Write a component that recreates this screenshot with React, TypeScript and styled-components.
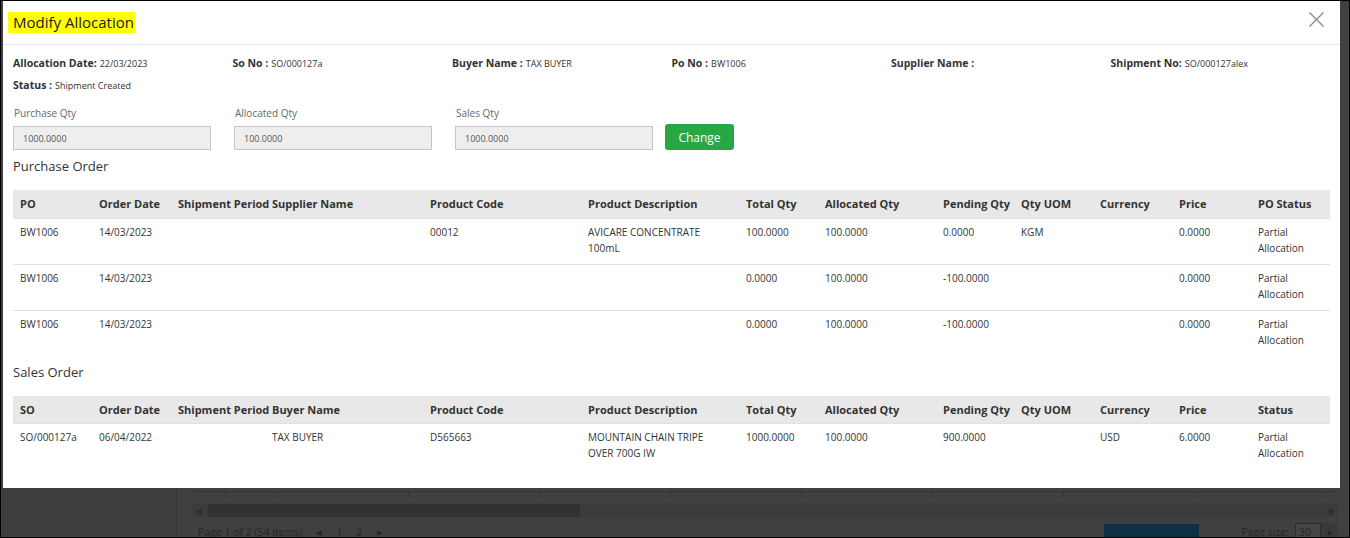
import React from "react"
import styled, { createGlobalStyle } from "styled-components"

const GlobalStyle = createGlobalStyle`
    html, body {
        margin: 0;
        padding: 0;
        background: #404040;
    }
    body {
        font-family: "Open Sans", "Liberation Sans", sans-serif;
    }
    * {
        box-sizing: border-box;
    }
`

// ---- page behind the overlay ----

const Screen = styled.div`
    position: relative;
    width: 1350px;
    height: 538px;
    border: 1px solid #000;
    background: #404040;
    overflow: hidden;
    display: flex;
`
const Sidebar = styled.div`
    width: 176px;
    flex-shrink: 0;
    background: #3e3e3e;
    border-right: 1px solid #363636;
`
const Main = styled.div`
    flex: 1;
    min-width: 0;
    display: flex;
    flex-direction: column;
    padding: 0 11px 0 16px;
`
const GridBody = styled.div`
    flex: 1;
    display: flex;
    flex-direction: column;
    justify-content: flex-end;
    padding-bottom: 5px;
`
const GridRow = styled.div`
    display: flex;
    height: 7px;
    border-top: 1px solid #333;
`
const GridCell = styled.div<{ w: number }>`
    width: ${p => p.w}px;
    flex-shrink: 0;
    border-right: 1px solid #333;
`
const ScrollBar = styled.div`
    height: 14px;
    background: #3b3b3b;
    display: flex;
    align-items: center;
    padding: 0 3px;
    color: #2c2c2c;
    font-size: 8px;
`
const ScrollThumb = styled.div`
    width: 372px;
    height: 13px;
    margin-left: 6px;
    background: #323232;
`
const ScrollGap = styled.div`
    flex: 1;
`
const Footer = styled.div`
    height: 20px;
    display: flex;
    align-items: flex-start;
    padding-top: 8px;
    font-size: 10.5px;
    color: #262626;
`
const Pager = styled.div`
    display: flex;
    gap: 14px;
    margin-left: 5px;
    line-height: 14px;
`
const FooterRight = styled.div`
    margin-left: auto;
    display: flex;
    align-items: flex-start;
`
const DarkButton = styled.div`
    width: 95px;
    height: 20px;
    margin-top: -1px;
    background: #0c3045;
    margin-right: 42px;
`
const PageSize = styled.div`
    line-height: 14px;
    margin-right: 6px;
`
const SizeBox = styled.div`
    width: 26px;
    height: 18px;
    margin-top: -2px;
    border: 1px solid #2c2c2c;
    background: #454545;
    padding-left: 3px;
    line-height: 16px;
`
const SizeArrow = styled.div`
    width: 17px;
    height: 18px;
    margin-top: -2px;
    background: #3a3a3a;
    text-align: center;
    line-height: 18px;
    font-size: 8px;
`

// ---- modal ----

const Modal = styled.div`
    position: absolute;
    top: 0;
    left: 2px;
    width: 1337px;
    height: 487px;
    background: #fff;
    display: flex;
    flex-direction: column;
    color: #333;
`
const ModalHeader = styled.div`
    height: 44px;
    flex-shrink: 0;
    border-bottom: 1px solid #e5e5e5;
    display: flex;
    align-items: center;
    justify-content: space-between;
    padding: 0 16px 0 5px;
`
const Title = styled.span`
    background: #ffff00;
    font-size: 15px;
    line-height: 21px;
    padding: 0 1px 0 5px;
    color: #222;
`
const CloseButton = styled.button`
    border: none;
    background: none;
    padding: 0;
    margin-bottom: 6px;
    width: 15px;
    height: 15px;
    cursor: pointer;
    display: flex;
`
const ModalBody = styled.div`
    padding: 0 10px 18px;
`
const InfoGrid = styled.div`
    display: grid;
    grid-template-columns: repeat(6, 1fr);
    row-gap: 5px;
    padding-top: 10px;
`
const InfoItem = styled.div`
    display: flex;
    align-items: baseline;
    gap: 3px;
    line-height: 16px;
    white-space: nowrap;
`
const InfoLabel = styled.span`
    font-weight: 700;
    font-size: 10.5px;
    color: #333;
`
const InfoValue = styled.span`
    font-size: 9px;
    color: #333;
`
const QtyRow = styled.div`
    display: flex;
    align-items: flex-end;
    margin-top: 12px;
`
const Field = styled.div`
    width: 198px;
    margin-right: 23px;
    display: flex;
    flex-direction: column;
`
const FieldLabel = styled.label`
    font-size: 10px;
    line-height: 14px;
    color: #666;
    margin-bottom: 6px;
    padding-left: 1px;
`
const QtyInput = styled.input`
    height: 24px;
    width: 100%;
    background: #eeeeee;
    border: 1px solid #c6c6c6;
    padding: 0 0 0 9px;
    font-family: "Open Sans", "Liberation Sans", sans-serif;
    font-size: 9px;
    color: #555;
    outline: none;
`
const ChangeButton = styled.button`
    margin-left: -11px;
    width: 69px;
    height: 26px;
    border: none;
    border-radius: 3px;
    background: #28a745;
    color: #fff;
    font-family: "Open Sans", "Liberation Sans", sans-serif;
    font-size: 12px;
    cursor: pointer;
`
const SectionTitle = styled.div`
    font-size: 13px;
    line-height: 18px;
    color: #333;
    margin: 7px 0 15px;
`
const Table = styled.table`
    width: 100%;
    table-layout: fixed;
    border-collapse: collapse;
`
const Th = styled.th`
    height: 28px;
    padding: 0 0 0 7px;
    background: #e8e8e8;
    border-bottom: 1px solid #dee2e6;
    text-align: left;
    font-size: 11px;
    font-weight: 700;
    color: #333;
    white-space: nowrap;
`
const Tr = styled.tr`
    & + & td {
        border-top: 1px solid #dee2e6;
    }
`
const Td = styled.td`
    padding: 5px 10px 8px 7px;
    vertical-align: top;
    font-size: 10px;
    line-height: 16px;
    color: #333;
`

const colWidths = [79, 79, 94, 158, 158, 158, 79, 118, 78, 79, 79, 79, 79]

const Cols = () => (
    <colgroup>
        {colWidths.map((w, i) => (
            <col key={i} style={{ width: w }} />
        ))}
    </colgroup>
)

const poHead = [
    "PO", "Order Date", "Shipment Period", "Supplier Name", "Product Code",
    "Product Description", "Total Qty", "Allocated Qty", "Pending Qty",
    "Qty UOM", "Currency", "Price", "PO Status",
]
const poRows = [
    ["BW1006", "14/03/2023", "", "", "00012", "AVICARE CONCENTRATE 100mL", "100.0000", "100.0000", "0.0000", "KGM", "", "0.0000", "Partial Allocation"],
    ["BW1006", "14/03/2023", "", "", "", "", "0.0000", "100.0000", "-100.0000", "", "", "0.0000", "Partial Allocation"],
    ["BW1006", "14/03/2023", "", "", "", "", "0.0000", "100.0000", "-100.0000", "", "", "0.0000", "Partial Allocation"],
]
const soHead = [
    "SO", "Order Date", "Shipment Period", "Buyer Name", "Product Code",
    "Product Description", "Total Qty", "Allocated Qty", "Pending Qty",
    "Qty UOM", "Currency", "Price", "Status",
]
const soRows = [
    ["SO/000127a", "06/04/2022", "", "TAX BUYER", "D565663", "MOUNTAIN CHAIN TRIPE OVER 700G IW", "1000.0000", "100.0000", "900.0000", "", "USD", "6.0000", "Partial Allocation"],
]

const info = [
    ["Allocation Date:", "22/03/2023"],
    ["So No :", "SO/000127a"],
    ["Buyer Name :", "TAX BUYER"],
    ["Po No :", "BW1006"],
    ["Supplier Name :", ""],
    ["Shipment No:", "SO/000127alex"],
    ["Status :", "Shipment Created"],
]

const qtys = [
    ["Purchase Qty", "1000.0000"],
    ["Allocated Qty", "100.0000"],
    ["Sales Qty", "1000.0000"],
]

const DataTable = (props: { head: string[], rows: string[][] }) => (
    <Table>
        <Cols />
        <thead>
            <tr>
                {props.head.map((h, i) => <Th key={i}>{h}</Th>)}
            </tr>
        </thead>
        <tbody>
            {props.rows.map((r, i) => (
                <Tr key={i}>
                    {r.map((c, j) => <Td key={j}>{c}</Td>)}
                </Tr>
            ))}
        </tbody>
    </Table>
)

const gridCells = [33, 52, 131, 131, 131, 131, 131, 131, 131, 131, 121]

const App = () => (
    <>
        <GlobalStyle />
        <Screen>
            <Sidebar />
            <Main>
                <GridBody>
                    <GridRow>
                        {gridCells.map((w, i) => <GridCell key={i} w={w} />)}
                    </GridRow>
                </GridBody>
                <ScrollBar>
                    <span>◀</span>
                    <ScrollThumb />
                    <ScrollGap />
                    <span>▶</span>
                </ScrollBar>
                <Footer>
                    <Pager>
                        <span>Page 1 of 2 (54 items)</span>
                        <span>◂</span>
                        <span>1</span>
                        <span>2</span>
                        <span>▸</span>
                    </Pager>
                    <FooterRight>
                        <DarkButton />
                        <PageSize>Page size:</PageSize>
                        <SizeBox>30</SizeBox>
                        <SizeArrow>▲</SizeArrow>
                    </FooterRight>
                </Footer>
            </Main>

            <Modal>
                <ModalHeader>
                    <Title>Modify Allocation</Title>
                    <CloseButton aria-label="Close">
                        <svg width="15" height="15" viewBox="0 0 15 15">
                            <path d="M0.5 0.5 L14.5 14.5 M14.5 0.5 L0.5 14.5" stroke="#8a8a8a" strokeWidth="1.3" fill="none" />
                        </svg>
                    </CloseButton>
                </ModalHeader>
                <ModalBody>
                    <InfoGrid>
                        {info.map(([l, v], i) => (
                            <InfoItem key={i}>
                                <InfoLabel>{l}</InfoLabel>
                                <InfoValue>{v}</InfoValue>
                            </InfoItem>
                        ))}
                    </InfoGrid>
                    <QtyRow>
                        {qtys.map(([l, v], i) => (
                            <Field key={i}>
                                <FieldLabel>{l}</FieldLabel>
                                <QtyInput readOnly value={v} />
                            </Field>
                        ))}
                        <ChangeButton>Change</ChangeButton>
                    </QtyRow>
                    <SectionTitle>Purchase Order</SectionTitle>
                    <DataTable head={poHead} rows={poRows} />
                    <SectionTitle>Sales Order</SectionTitle>
                    <DataTable head={soHead} rows={soRows} />
                </ModalBody>
            </Modal>
        </Screen>
    </>
)

export default App
